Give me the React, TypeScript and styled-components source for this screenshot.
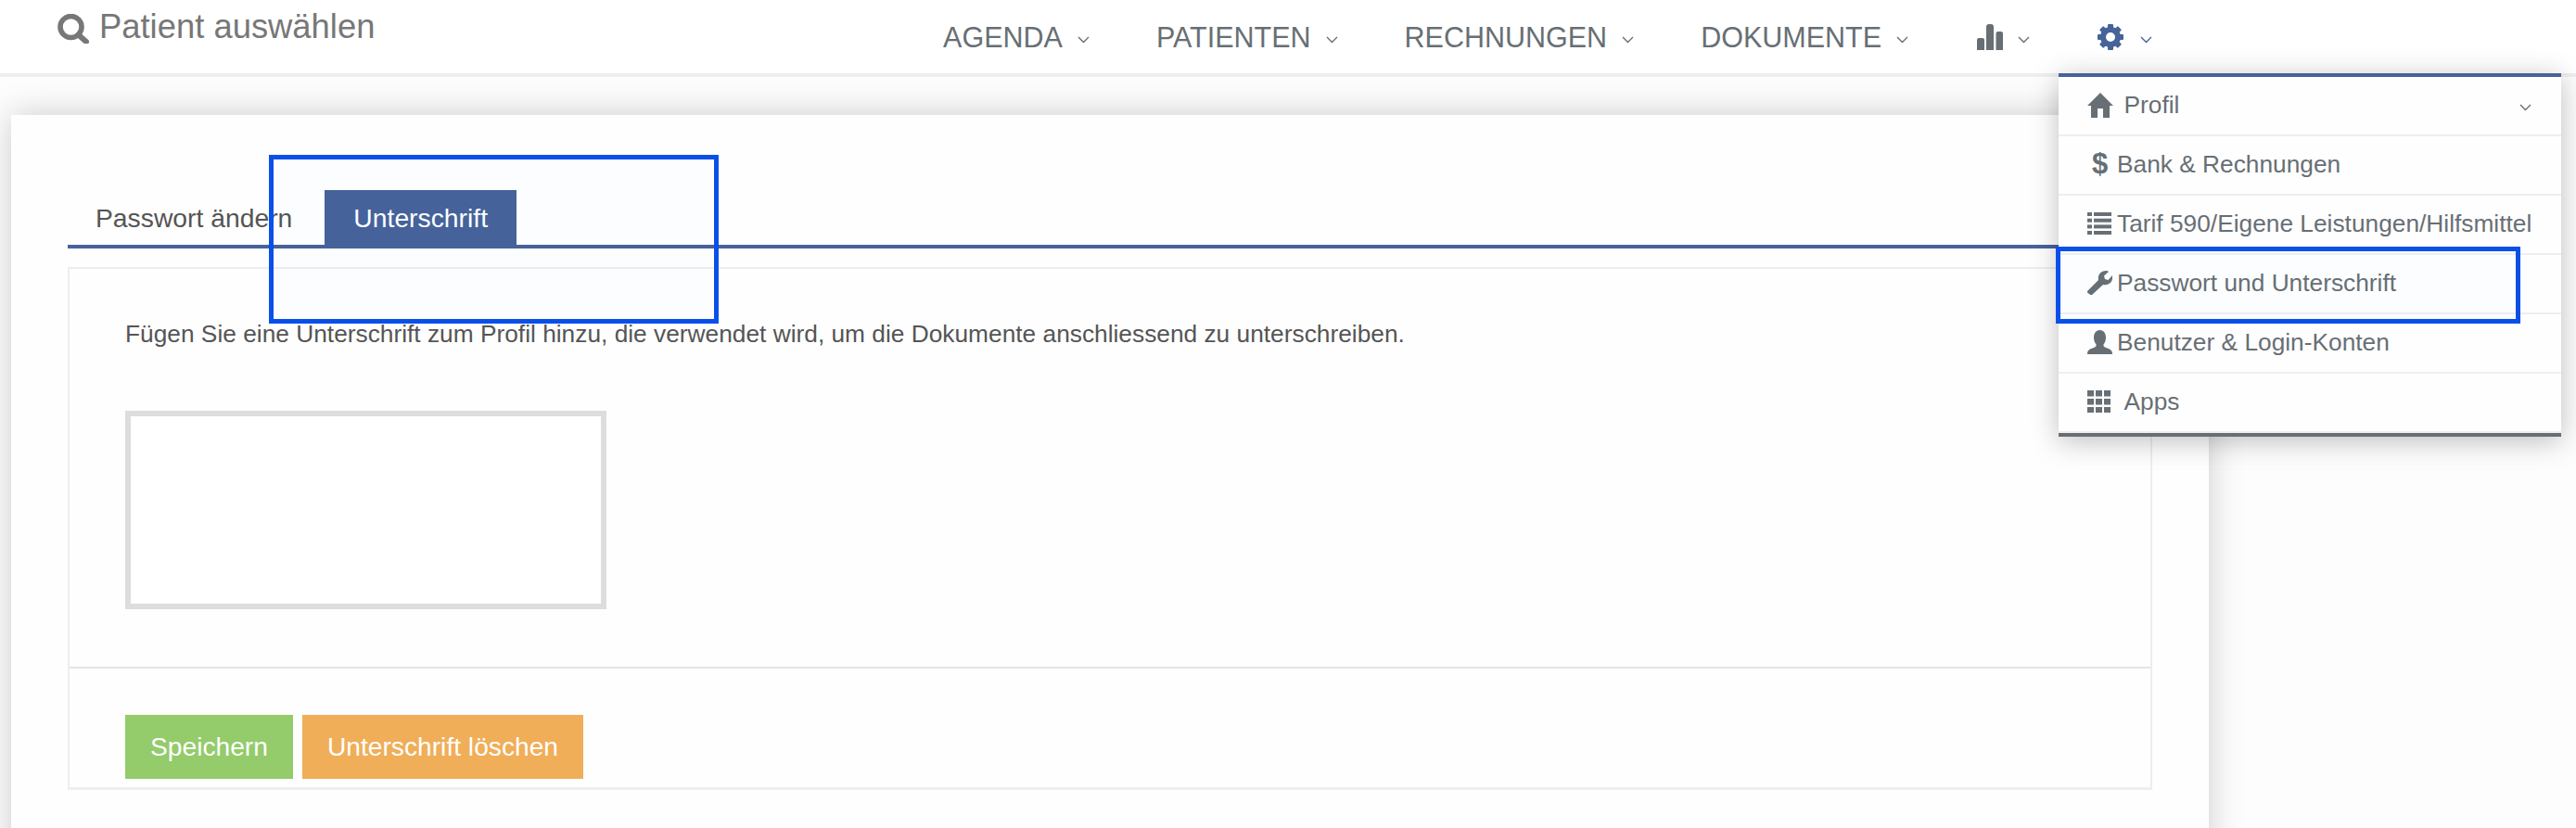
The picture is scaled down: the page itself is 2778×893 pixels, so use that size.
import React from "react";
import styled, { createGlobalStyle } from "styled-components";
import { type ReactNode } from "react";

const BLUE = "#46639a";
const GREY = "#676f75";

const GlobalStyle = createGlobalStyle`
  html, body {
    margin: 0;
    padding: 0;
    height: 893px;
    overflow: hidden;
    background: #fdfdfd;
    font-family: "Liberation Sans", Arial, sans-serif;
  }
`;

const Page = styled.div`
  position: relative;
  width: 2778px;
  height: 893px;
  overflow: hidden;
`;

const Header = styled.header`
  position: relative;
  z-index: 2;
  display: flex;
  align-items: center;
  height: 79px;
  padding: 0 457px 0 62px;
  background: #fff;
  border-bottom: 4px solid #eee;
`;

const Search = styled.div`
  display: flex;
  align-items: center;
  gap: 11px;
  align-self: flex-start;
  padding-top: 8px;
  font-size: 36.4px;
  color: #777;

  svg {
    margin-top: 3px;
  }
`;

const Nav = styled.nav`
  display: flex;
  align-items: center;
  gap: 72px;
  margin-left: auto;
`;

const NavItem = styled.div<{ $gap?: number }>`
  display: flex;
  align-items: center;
  gap: ${(p) => p.$gap ?? 16}px;
  font-size: 30.5px;
  color: ${GREY};
  padding-top: 1px;
`;

const ChartItem = styled(NavItem)`
  margin-left: 2px;
`;

const Chevron = styled.svg`
  margin-top: 5px;
  flex: none;
`;

const Card = styled.main`
  margin: 41px 0 0 12px;
  width: 2370px;
  height: 900px;
  box-sizing: border-box;
  padding: 81px 61px 0;
  background: #fefefe;
  box-shadow: 0 0 35px rgba(0, 0, 0, 0.2);
`;

const Tabs = styled.div`
  display: flex;
  gap: 5px;
  height: 59px;
  border-bottom: 4px solid ${BLUE};
`;

const Tab = styled.div<{ $active?: boolean }>`
  padding: 0 ${(p) => (p.$active ? 31 : 30)}px;
  line-height: 60px;
  font-size: 28.3px;
  color: ${(p) => (p.$active ? "#fff" : "#555")};
  background: ${(p) => (p.$active ? BLUE : "transparent")};
`;

const Panel = styled.section`
  margin-top: 20px;
  height: 564px;
  box-sizing: border-box;
  border: 2px solid #eee;
  border-bottom-width: 3px;
  display: flex;
  flex-direction: column;
`;

const PanelBody = styled.div`
  flex: 1;
  padding: 55px 60px 0;
`;

const Intro = styled.p`
  margin: 0 0 67px;
  font-size: 26.3px;
  color: #555;
`;

const SignatureBox = styled.div`
  width: 519px;
  height: 214px;
  box-sizing: border-box;
  border: 6px solid #ddd;
  background: #fff;
`;

const PanelFooter = styled.div`
  display: flex;
  gap: 10px;
  height: 130px;
  box-sizing: border-box;
  padding: 50px 60px 0;
  border-top: 2px solid #e4e4e4;
`;

const Button = styled.div<{ $color: string }>`
  height: 69px;
  padding: 0 27px;
  line-height: 69px;
  font-size: 28.2px;
  color: #fff;
  background: ${(p) => p.$color};
`;

const Dropdown = styled.div`
  position: absolute;
  z-index: 3;
  left: 2220px;
  top: 79px;
  width: 542px;
  box-sizing: border-box;
  background: #fefefe;
  border-top: 4px solid ${BLUE};
  border-bottom: 4px solid ${GREY};
  box-shadow: 0 5px 28px rgba(0, 0, 0, 0.25);
`;

const MenuRow = styled.div`
  display: flex;
  align-items: center;
  height: 64px;
  box-sizing: border-box;
  padding: 0 32px 2px 31px;
  border-bottom: 2px solid #eee;
  font-size: 26.3px;
  color: ${GREY};
  white-space: nowrap;
`;

const MenuIcon = styled.span<{ $gap?: number }>`
  display: flex;
  justify-content: flex-start;
  flex: none;
  width: 28px;
  margin-right: ${(p) => p.$gap ?? 4}px;
`;

const Dollar = styled.span`
  margin-left: 5px;
  font-size: 31px;
  font-weight: 700;
  line-height: 30px;
`;

const RowChevron = styled.svg`
  margin: 6px 0 0 auto;
`;

const Marker = styled.div<{ $left: number; $top: number; $w: number; $h: number }>`
  position: absolute;
  z-index: 4;
  left: ${(p) => p.$left}px;
  top: ${(p) => p.$top}px;
  width: ${(p) => p.$w}px;
  height: ${(p) => p.$h}px;
  box-sizing: border-box;
  border: 5px solid #0a50e8;
  background: rgba(10, 100, 232, 0.008);
`;

const ChevronIcon = ({ color = GREY }: { color?: string }) => (
  <Chevron width="13" height="8" viewBox="0 0 13 8">
    <path d="M1 1l5.5 5.5L12 1" fill="none" stroke={color} strokeWidth="1.4" />
  </Chevron>
);

const SearchIcon = () => (
  <svg width="34" height="32" viewBox="0 0 34 32">
    <circle cx="14.5" cy="14" r="11.5" fill="none" stroke="#777" strokeWidth="5.6" />
    <path d="M22.5 22.5L31 30" stroke="#777" strokeWidth="6" strokeLinecap="round" />
  </svg>
);

const ChartIcon = () => (
  <svg width="28" height="28" viewBox="0 0 28 28" fill={GREY}>
    <path d="M0 17a2 2 0 0 1 2-2h4a2 2 0 0 1 2 2v11H0z" />
    <path d="M10 3a3 3 0 0 1 3-3h2a3 3 0 0 1 3 3v25h-8z" />
    <path d="M20.500 10a2 2 0 0 1 2-2h3.500a2 2 0 0 1 2 2v18h-7.500z" />
  </svg>
);

const CogIcon = () => (
  <svg width="30" height="28" viewBox="0 0 30 28" fill={BLUE}>
    {[0, 45, 90, 135, 180, 225, 270, 315].map((deg) => (
      <rect key={deg} x="12" y="0" width="6" height="7" rx="1" transform={`rotate(${deg} 15 14)`} />
    ))}
    <circle cx="15" cy="14" r="8" fill="none" stroke={BLUE} strokeWidth="6" />
  </svg>
);

const HomeIcon = () => (
  <svg width="28" height="27" viewBox="0 0 28 27" fill={GREY}>
    <path d="M14 0l14 14h-4v13h-7V17h-6v10H4V14H0z" />
  </svg>
);

const ListIcon = () => (
  <svg width="26" height="24" viewBox="0 0 26 24" fill={GREY}>
    {[0, 6.7, 13.4, 20].map((y) => (
      <g key={y}>
        <rect x="0" y={y} width="5" height="4" />
        <rect x="7" y={y} width="19" height="4" />
      </g>
    ))}
  </svg>
);

const WrenchIcon = () => (
  <svg width="27" height="26" viewBox="0 0 27 26" fill={GREY}>
    <path d="M0 22L12 10C11 5 14 0 20 0c1 0 2 0 3 1l-5 4.500 1 3.500 3.500 1L27 5c.5 1 0 3 0 3 0 5-5 8-10 7L5 26c-1 .5-2 0-3-1l-2-1.500z" />
  </svg>
);

const UserIcon = () => (
  <svg width="27" height="26" viewBox="0 0 27 26" fill={GREY}>
    <path d="M13.500 0C18 0 20 4 20 8c0 3-1 5.500-2.500 7.500-.5 1.500.5 2.500 2.500 3.500 4 1.500 7 2 7 7H0c0-5 3-5.500 7-7 2-1 3-2 2.500-3.500C8 13.500 7 11 7 8c0-4 2-8 6.500-8z" />
  </svg>
);

const GridIcon = () => (
  <svg width="25" height="24" viewBox="0 0 25 24" fill={GREY}>
    {[0, 9, 18].map((y) =>
      [0, 9, 18].map((x) => <rect key={`${x}-${y}`} x={x} y={y} width="7" height="6.500" />)
    )}
  </svg>
);

const menu: { icon: ReactNode; label: string; gap?: number; more?: boolean }[] = [
  { icon: <HomeIcon />, label: "Profil", gap: 11.5, more: true },
  { icon: <Dollar>$</Dollar>, label: "Bank & Rechnungen" },
  { icon: <ListIcon />, label: "Tarif 590/Eigene Leistungen/Hilfsmittel" },
  { icon: <WrenchIcon />, label: "Passwort und Unterschrift" },
  { icon: <UserIcon />, label: "Benutzer & Login-Konten" },
  { icon: <GridIcon />, label: "Apps", gap: 11.5 },
];

export default function App() {
  return (
    <Page>
      <GlobalStyle />
      <Header>
        <Search>
          <SearchIcon />
          Patient auswählen
        </Search>
        <Nav>
          {["AGENDA", "PATIENTEN", "RECHNUNGEN", "DOKUMENTE"].map((label) => (
            <NavItem key={label}>
              {label}
              <ChevronIcon />
            </NavItem>
          ))}
          <ChartItem>
            <ChartIcon />
            <ChevronIcon />
          </ChartItem>
          <NavItem $gap={17}>
            <CogIcon />
            <ChevronIcon color={BLUE} />
          </NavItem>
        </Nav>
      </Header>

      <Card>
        <Tabs>
          <Tab>Passwort ändern</Tab>
          <Tab $active>Unterschrift</Tab>
        </Tabs>
        <Panel>
          <PanelBody>
            <Intro>
              Fügen Sie eine Unterschrift zum Profil hinzu, die verwendet wird, um die Dokumente
              anschliessend zu unterschreiben.
            </Intro>
            <SignatureBox />
          </PanelBody>
          <PanelFooter>
            <Button $color="#94cb6b">Speichern</Button>
            <Button $color="#f0ae59">Unterschrift löschen</Button>
          </PanelFooter>
        </Panel>
      </Card>

      <Dropdown>
        {menu.map((item) => (
          <MenuRow key={item.label}>
            <MenuIcon $gap={item.gap}>{item.icon}</MenuIcon>
            {item.label}
            {item.more && (
              <RowChevron width="13" height="8" viewBox="0 0 13 8">
                <path d="M1 1l5.500 5.500L12 1" fill="none" stroke={GREY} strokeWidth="1.400" />
              </RowChevron>
            )}
          </MenuRow>
        ))}
      </Dropdown>

      <Marker $left={290} $top={167} $w={485} $h={182} />
      <Marker $left={2217} $top={266} $w={501} $h={83} />
    </Page>
  );
}
